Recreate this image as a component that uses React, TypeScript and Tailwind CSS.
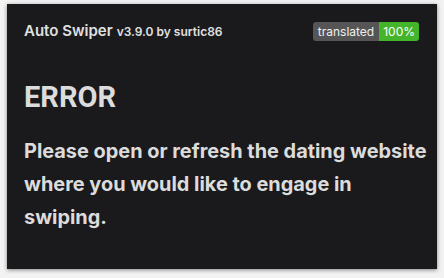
import React from "react";

const App = () => {
  return (
    <div className="w-[444px] h-[278px] bg-[#f2f2f2] pt-[4px] pl-[7px]">
      <div
        className="w-[430px] h-[265px] bg-[#1a1a1c] text-[#e0e0e0] shadow-[0_1px_4px_rgba(0,0,0,0.45)] pl-[17px] pr-[8px] pt-[16px]"
        style={{ fontFamily: "Inter, 'Liberation Sans', sans-serif" }}
      >
        <div className="flex items-center justify-between h-[22px] pr-[9px]">
          <div className="flex items-baseline gap-[4px]">
            <span className="text-[15px] font-semibold">Auto Swiper</span>
            <span className="text-[12px] font-semibold">v3.9.0 by surtic86</span>
          </div>
          <div className="flex text-[12px] leading-[19px] rounded-[3px] overflow-hidden mr-[1px]">
            <span className="bg-[#555555] text-[#f0f0f0] px-[5px]">translated</span>
            <span className="bg-[#44b52a] text-white px-[4px]">100%</span>
          </div>
        </div>
        <h1
          className="text-[29px] font-bold mt-[38px] leading-[34px] text-[#dcdcdc]"
          style={{ fontFamily: "Roboto, 'Liberation Sans', sans-serif" }}
        >
          ERROR
        </h1>
        <p className="text-[19.9px] font-bold leading-[33px] mt-[21px] text-[#dcdcdc]">
          Please open or refresh the dating website where you would like to engage in swiping.
        </p>
      </div>
    </div>
  );
};

export default App;
